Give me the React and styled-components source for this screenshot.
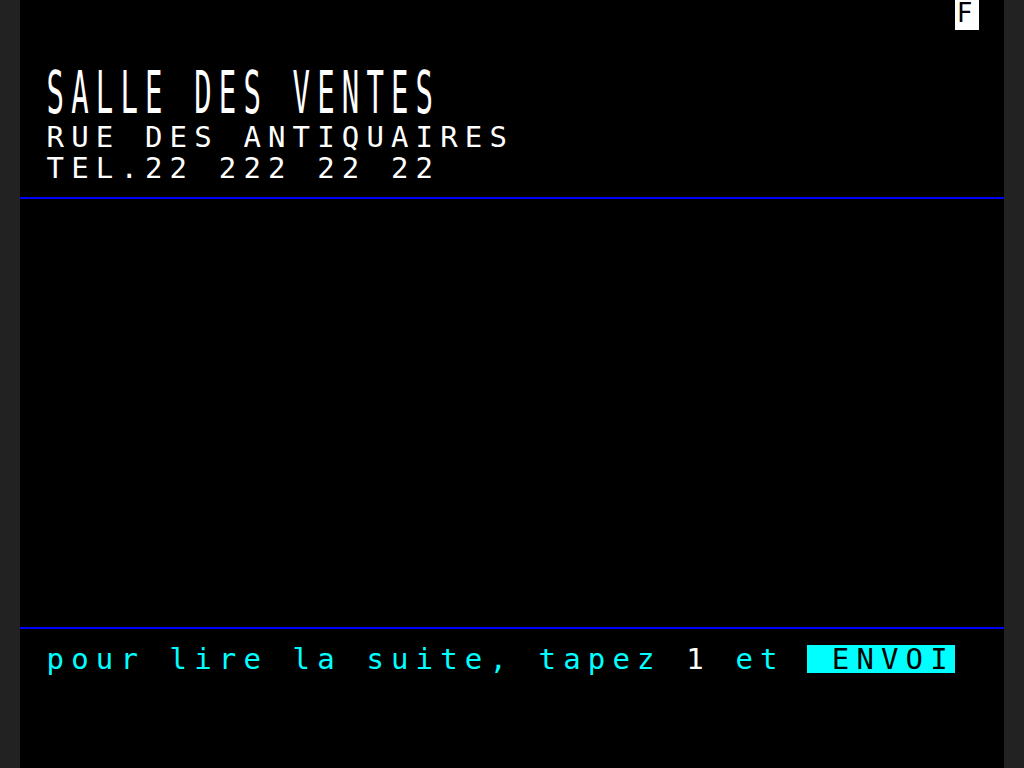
import React from 'react'
import styled, { createGlobalStyle } from 'styled-components'

// Minitel page: 40 columns x 25 rows on a 984x768 black screen
const COL = 24.6
const ROW = 30.72

const Global = createGlobalStyle`
  html, body {
    margin: 0;
    padding: 0;
    background: #222222;
  }
  #root {
    display: flex;
    justify-content: center;
  }
`

const Screen = styled.div`
  width: ${COL * 40}px;
  height: 768px;
  background: #000;
  display: grid;
  grid-template-rows: repeat(25, ${ROW}px);
  overflow: hidden;
  font-family: "DejaVu Sans Mono", "Liberation Mono", monospace;
  font-size: 29px;
  letter-spacing: ${COL - 29 * 0.60205}px;
  white-space: pre;
`

const StatusRow = styled.div`
  display: flex;
  justify-content: flex-end;
  padding-right: ${COL}px;
`

const StatusCell = styled.div`
  width: ${COL}px;
  height: 30px;
  background: #fff;
  color: #000;
  font-size: 26px;
  line-height: 27px;
  letter-spacing: 0;
  padding-left: 2px;
  box-sizing: border-box;
`

const Spacer = styled.div`
  grid-row: span ${(p) => p.$rows || 1};
`

const Row = styled.div`
  padding-left: ${COL + 2}px;
  line-height: 28px;
  color: ${(p) => p.$color || '#fff'};
`

const DoubleRow = styled.div`
  grid-row: span 2;
  display: flex;
  align-items: center;
  padding-left: ${COL + 2}px;
  padding-top: 2px;
  color: #fff;
`

const Tall = styled.span`
  display: inline-block;
  line-height: 28px;
  transform: scaleY(2);
  transform-origin: 0 14px;
`

const Rule = styled.div`
  padding-top: 13px;
  &::before {
    content: '';
    display: block;
    height: 2px;
    background: #0000ff;
  }
`

const Ink = styled.span`
  color: ${(p) => p.$color};
`

const Inverse = styled.span`
  display: inline-block;
  height: 28px;
  line-height: 28px;
  margin-left: -2px;
  background: #00ffff;
  color: #000;
`

export default function App() {
  return (
    <>
      <Global />
      <Screen>
        <StatusRow>
          <StatusCell>F</StatusCell>
        </StatusRow>
        <Spacer />
        <DoubleRow>
          <Tall>SALLE DES VENTES</Tall>
        </DoubleRow>
        <Row>RUE DES ANTIQUAIRES</Row>
        <Row>TEL.22 222 22 22</Row>
        <Rule />
        <Spacer $rows={13} />
        <Rule />
        <Row $color="#00ffff">
          pour lire la suite, tapez <Ink $color="#fff">1</Ink> et <Inverse> ENVOI</Inverse>
        </Row>
      </Screen>
    </>
  )
}
